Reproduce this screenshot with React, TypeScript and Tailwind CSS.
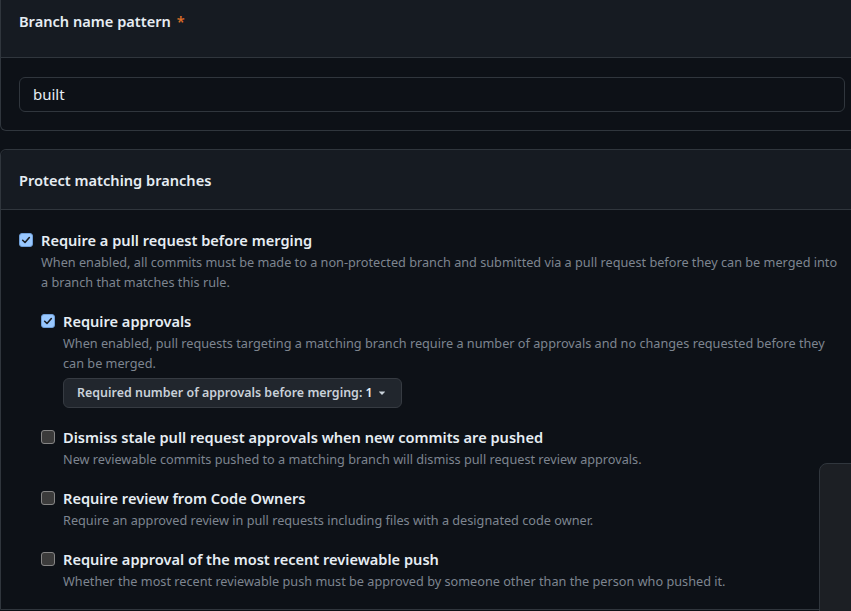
import React from 'react';

type Option = {
    title: string;
    description: React.ReactNode;
    checked: boolean;
};

function Checkbox({checked}: { checked: boolean }) {
    if (checked) {
        return (
            <span className="mt-[4px] flex h-[14px] w-[14px] shrink-0 items-center justify-center rounded-[3px] border border-[#6f9fd8] bg-[#99c8ff]">
                <svg viewBox="0 0 12 12" className="h-[10px] w-[10px]">
                    <path d="M2 6.3 L4.8 9 L10 3" fill="none" stroke="#1b1f24" strokeWidth="1.9" strokeLinecap="round" strokeLinejoin="round"/>
                </svg>
            </span>
        );
    }
    return <span className="mt-[4px] block h-[14px] w-[14px] shrink-0 rounded-[3px] border border-[#858585] bg-[#3b3b3b]"/>;
}

function OptionRow({option, children}: { option: Option; children?: React.ReactNode }) {
    return (
        <div className="flex gap-[8px]">
            <Checkbox checked={option.checked}/>
            <div className="min-w-0 flex-1">
                <div className="text-[14.6px] font-semibold leading-[22px] text-[#e6edf3]">{option.title}</div>
                <div className="mt-[1px] text-[12.7px] leading-[20px] text-[#7d8590]">{option.description}</div>
                {children}
            </div>
        </div>
    );
}

const nested: Option[] = [
    {
        title: 'Dismiss stale pull request approvals when new commits are pushed',
        description: 'New reviewable commits pushed to a matching branch will dismiss pull request review approvals.',
        checked: false,
    },
    {
        title: 'Require review from Code Owners',
        description: 'Require an approved review in pull requests including files with a designated code owner.',
        checked: false,
    },
    {
        title: 'Require approval of the most recent reviewable push',
        description: 'Whether the most recent reviewable push must be approved by someone other than the person who pushed it.',
        checked: false,
    },
];

export default function App() {
    return (
        <div className="relative h-[611px] w-[851px] overflow-hidden bg-[#0d1117]" style={{fontFamily: '"Noto Sans", "Open Sans", sans-serif'}}>
            {/* Branch name pattern box, top cut off */}
            <div className="-mt-[1px] mr-[-10px] rounded-b-[6px] border border-t-0 border-[#30363d]">
                <div className="flex h-[59px] items-start border-b border-[#30363d] bg-[#161b22] px-[18px] pt-[11px]">
                    <span className="text-[14.6px] font-semibold leading-[22px] text-[#e6edf3]">Branch name pattern</span>
                    <span className="ml-[6px] text-[14.6px] font-semibold leading-[22px] text-[#db6d28]">*</span>
                </div>
                <div className="px-[18px] pt-[19px] pb-[18px]">
                    <div className="flex h-[35px] w-[826px] items-center rounded-[6px] border border-[#30363d] bg-[#0d1117] px-[13px] text-[15px] text-[#e6edf3]">
                        built
                    </div>
                </div>
            </div>

            {/* Protect matching branches box */}
            <div className="mt-[18px] mr-[-10px] rounded-t-[6px] border border-[#30363d]">
                <div className="flex h-[60px] items-center rounded-t-[6px] border-b border-[#30363d] bg-[#161b22] px-[18px] pt-[2px]">
                    <span className="text-[14.6px] font-semibold text-[#e6edf3]">Protect matching branches</span>
                </div>
                <div className="pl-[18px] pr-[18px] pt-[19px] pb-[18px]">
                    <OptionRow option={{
                        title: 'Require a pull request before merging',
                        description: 'When enabled, all commits must be made to a non-protected branch and submitted via a pull request before they can be merged into a branch that matches this rule.',
                        checked: true,
                    }}>
                        <div className="mt-[18px] flex flex-col gap-[18px]">
                            <OptionRow option={{
                                title: 'Require approvals',
                                description: 'When enabled, pull requests targeting a matching branch require a number of approvals and no changes requested before they can be merged.',
                                checked: true,
                            }}>
                                <button className="mt-[5px] flex h-[30px] items-center gap-[3px] rounded-[6px] border border-[#363b42] bg-[#21262d] px-[13px] text-[12.45px] font-semibold text-[#c9d1d9]">
                                    <span>Required number of approvals before merging: <span className="text-[#e6edf3]">1</span></span>
                                    <svg viewBox="0 0 16 16" className="h-[12px] w-[12px]" fill="#c9d1d9">
                                        <path d="M4.4 6h7.2c.4 0 .6.5.3.8L8.3 10.4a.4.4 0 0 1-.6 0L4.1 6.8c-.3-.3-.1-.8.3-.8Z"/>
                                    </svg>
                                </button>
                            </OptionRow>
                            {nested.map(o => <OptionRow key={o.title} option={o}/>)}
                        </div>
                    </OptionRow>
                </div>
            </div>

            {/* floating panel at the right edge */}
            <div className="absolute left-[819px] top-[463px] h-[200px] w-[80px] rounded-tl-[8px] border border-[#30363d] bg-[#1c1f24]"/>
        </div>
    );
}
